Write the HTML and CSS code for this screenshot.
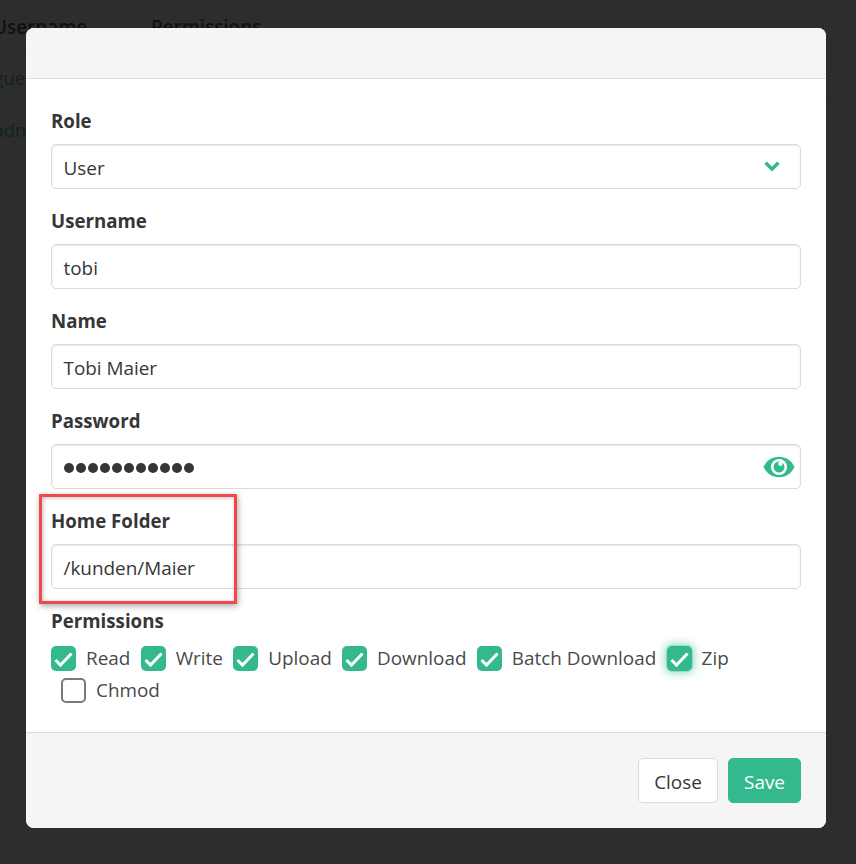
FILE: index.html
```html
<!DOCTYPE html>
<html lang="en">
<head>
<meta charset="utf-8">
<title>Edit user</title>
<link rel="stylesheet" href="styles.css">
</head>
<body>
<div class="page">
  <div class="bg-row bg-head"><span class="bg-col1">Username</span><span>Permissions</span></div>
  <div class="bg-row bg-link"><span>guest</span></div>
  <div class="bg-row bg-link bg-last"><span>admin</span></div>
</div>
<div class="overlay"></div>
<div class="modal">
  <header class="modal-head"></header>
  <section class="modal-body">
    <div class="field">
      <label class="label">Role</label>
      <div class="input has-icon"><span>User</span>
        <svg class="chevron" viewBox="0 0 16 11" width="16" height="11"><path d="M1.500 1.800 8 8 14.500 1.800" fill="none" stroke="#34b98f" stroke-width="3.500"/></svg>
      </div>
    </div>
    <div class="field">
      <label class="label">Username</label>
      <div class="input"><span>tobi</span></div>
    </div>
    <div class="field">
      <label class="label">Name</label>
      <div class="input"><span>Tobi Maier</span></div>
    </div>
    <div class="field">
      <label class="label">Password</label>
      <div class="input has-icon"><span class="dots"><i></i><i></i><i></i><i></i><i></i><i></i><i></i><i></i><i></i><i></i><i></i></span>
        <svg class="eye" viewBox="0 0 32 22" width="32" height="22"><path fill="#34b98f" d="M.5 11C3.500 4.500 9 .8 16 .8S28.500 4.500 31.500 11C28.500 17.500 23 21.200 16 21.200S3.500 17.500 .5 11Z"/><circle cx="16" cy="11" r="8" fill="#fff"/><circle cx="16" cy="11" r="5.500" fill="#34b98f"/><circle cx="17.500" cy="7.800" r="2.200" fill="#fff"/></svg>
      </div>
    </div>
    <div class="field">
      <label class="label">Home Folder</label>
      <div class="input"><span>/kunden/Maier</span></div>
    </div>
    <div class="field">
      <label class="label">Permissions</label>
      <div class="checks">
        <div class="check"><span class="box on"><svg viewBox="0 0 25 25" width="25" height="25"><path d="M4.500 14 9.500 19 20.500 7.500" fill="none" stroke="#fff" stroke-width="3"/></svg></span>Read</div>
        <div class="check"><span class="box on"><svg viewBox="0 0 25 25" width="25" height="25"><path d="M4.500 14 9.500 19 20.500 7.500" fill="none" stroke="#fff" stroke-width="3"/></svg></span>Write</div>
        <div class="check"><span class="box on"><svg viewBox="0 0 25 25" width="25" height="25"><path d="M4.500 14 9.500 19 20.500 7.500" fill="none" stroke="#fff" stroke-width="3"/></svg></span>Upload</div>
        <div class="check"><span class="box on"><svg viewBox="0 0 25 25" width="25" height="25"><path d="M4.500 14 9.500 19 20.500 7.500" fill="none" stroke="#fff" stroke-width="3"/></svg></span>Download</div>
        <div class="check"><span class="box on"><svg viewBox="0 0 25 25" width="25" height="25"><path d="M4.500 14 9.500 19 20.500 7.500" fill="none" stroke="#fff" stroke-width="3"/></svg></span>Batch Download</div>
        <div class="check"><span class="box on glow"><svg viewBox="0 0 25 25" width="25" height="25"><path d="M4.500 14 9.500 19 20.500 7.500" fill="none" stroke="#fff" stroke-width="3"/></svg></span>Zip</div>
        <div class="check check-wrapped"><span class="box"></span>Chmod</div>
      </div>
    </div>
  </section>
  <footer class="modal-foot">
    <button class="btn" type="button">Close</button>
    <button class="btn btn-save" type="button">Save</button>
  </footer>
  <div class="callout"></div>
</div>
</body>
</html>
```
FILE: styles.css
```css
* { box-sizing: border-box; }
html, body { margin: 0; height: 864px; overflow: hidden; }
body {
  position: relative;
  background: #fff;
  font-family: "Open Sans", "Noto Sans", sans-serif;
  font-size: 18.900px;
  color: #363636;
}
.bg-row {
  display: flex;
  height: 52px;
  align-items: center;
  border-bottom: 1px solid #dbdbdb;
  margin-left: -7px;
}
.bg-head { font-weight: 600; height: 52px; padding-top: 3px; }
.bg-col1 { width: 158px; }
.bg-link { color: #34b98f; height: 51px; padding-top: 2px; }
.bg-last { border-bottom: 0; }
.overlay {
  position: absolute;
  inset: 0;
  background: rgba(10, 10, 10, 0.86);
}
.modal {
  position: absolute;
  left: 26px;
  top: 28px;
  width: 800px;
  height: 800px;
  display: flex;
  flex-direction: column;
  border-radius: 8px;
  overflow: hidden;
  background: #fff;
}
.modal-head {
  height: 51px;
  flex: none;
  background: #f5f5f5;
  border-bottom: 1px solid #dbdbdb;
}
.modal-body {
  flex: 1;
  padding: 29px 25px 0;
  display: flex;
  flex-direction: column;
}
.field { height: 100px; }
.label {
  display: block;
  font-weight: 700;
  font-size: 18.700px;
  line-height: 24px;
  height: 36px;
  margin: 0;
  padding-top: 1px;
}
.input {
  display: flex;
  align-items: center;
  justify-content: space-between;
  height: 45px;
  padding: 2px 12px 0 11.500px;
  background: #fff;
  border: 1px solid #dbdbdb;
  border-radius: 5px;
  box-shadow: inset 0 1px 2px rgba(10, 10, 10, 0.1);
  line-height: 24px;
}
.has-icon { padding-right: 5px; }
.chevron { margin: -2px 15px 0 0; }
.eye { margin-top: -2px; }
.dots { display: flex; gap: 2px; }
.dots i {
  width: 10px;
  height: 10px;
  border-radius: 50%;
  background: #363636;
}
.checks {
  display: flex;
  flex-wrap: wrap;
  gap: 0 10.300px;
  margin-top: -2px;
}
.check {
  display: flex;
  align-items: center;
  height: 32px;
  color: #4a4a4a;
}
.check-wrapped { margin-left: 10px; }
.box {
  width: 25px;
  height: 25px;
  margin-right: 10px;
  border: 2px solid #7a7a7a;
  border-radius: 5px;
  background: #fff;
  display: flex;
  align-items: center;
  justify-content: center;
}
.box.on { background: #34b98f; border: 0; }
.box.glow { box-shadow: 0 0 0 1px rgba(52, 185, 143, .25), 0 0 9px 2px rgba(52, 185, 143, 0.55); }
.modal-foot {
  flex: none;
  height: 96px;
  display: flex;
  justify-content: flex-end;
  align-items: center;
  gap: 10px;
  padding: 0 25px;
  background: #f5f5f5;
  border-top: 1px solid #dbdbdb;
}
.btn {
  height: 45px;
  width: 80px;
  padding: 2px 0 0;
  font: inherit;
  color: #363636;
  background: #fff;
  border: 1px solid #dbdbdb;
  border-radius: 5px;
}
.btn-save { width: 73px; color: #fff; background: #34b98f; border-color: #34b98f; }
.callout {
  position: absolute;
  left: 13px;
  top: 466px;
  width: 198px;
  height: 110px;
  border: 3px solid #f4474c;
  box-shadow: 1px 2px 6px rgba(0, 0, 0, 0.35), inset 1px 1px 4px rgba(0, 0, 0, 0.25);
}
```
